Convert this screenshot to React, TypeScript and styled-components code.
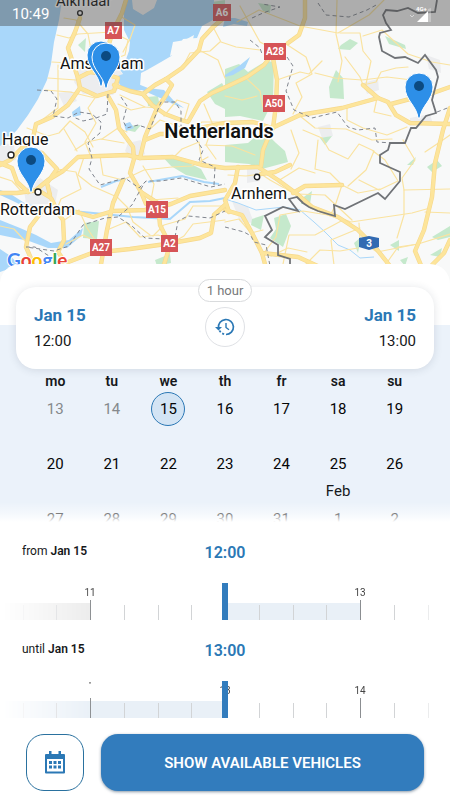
import React from "react";
import styled, { createGlobalStyle } from "styled-components";

const blue = "#2b78b5";
const font = 'Roboto, "Liberation Sans", sans-serif';

const GlobalStyle = createGlobalStyle`
  * { box-sizing: border-box; }
  body { margin: 0; background: #fff; font-family: ${font}; color: #16181a; }
  button, input { font: inherit; }
`;

const Page = styled.main`
  display: flex;
  flex-direction: column;
  min-height: 100vh;
  background: #fff;
`;

const MapArea = styled.section`
  position: relative;
  height: 284px;
  overflow: hidden;
`;

const MapDrawing = styled.svg`
  display: block;
  width: 100%;
  height: 100%;
  font-family: ${font};
`;

const StatusBar = styled.header`
  position: absolute;
  inset: 0 0 auto;
  display: flex;
  align-items: center;
  justify-content: space-between;
  height: 26px;
  padding: 2px 18px 0 12px;
  background: rgba(70, 70, 70, 0.42);
  color: #fff;
  font-size: 15px;
`;

const Sheet = styled.section`
  position: relative;
  display: flex;
  flex-direction: column;
  flex: 1;
  margin-top: -20px;
  padding-top: 23px;
  border-radius: 20px 20px 0 0;
  background: #fff;
`;

const Summary = styled.div`
  position: relative;
  z-index: 1;
  display: grid;
  grid-template-columns: 1fr auto 1fr;
  height: 82px;
  margin: 0 16px -44px;
  padding: 0 18px;
  border-radius: 20px;
  background: #fff;
  box-shadow: 0 1px 8px rgba(40, 60, 80, 0.14);
`;

const Moment = styled.div<{ $end?: boolean }>`
  display: flex;
  flex-direction: column;
  gap: 4px;
  padding-top: 17px;
  text-align: ${(p) => (p.$end ? "right" : "left")};
  line-height: 22px;
`;

const MomentDate = styled.strong`
  color: ${blue};
  font-size: 17px;
  font-weight: 700;
`;

const MomentTime = styled.span`
  font-size: 15px;
`;

const Middle = styled.div`
  display: flex;
  flex-direction: column;
  align-items: center;
  gap: 5px;
  margin-top: -8px;
`;

const Duration = styled.span`
  padding: 0 8px;
  border: 1px solid #d9dbdd;
  border-radius: 12px;
  background: #fff;
  color: #77797b;
  font-size: 13px;
  line-height: 21px;
`;

const RoundButton = styled.button`
  display: grid;
  place-items: center;
  width: 40px;
  height: 40px;
  padding: 0;
  border: 1px solid #dfe1e5;
  border-radius: 50%;
  background: #fff;
  color: ${blue};
`;

const CalendarArea = styled.div`
  position: relative;
  height: 197px;
  padding: 47px 27px 0;
  overflow: hidden;
  background: #ebf2fa;
  &::after {
    content: "";
    position: absolute;
    inset: auto 0 0;
    height: 20px;
    background: linear-gradient(rgba(255, 255, 255, 0), rgba(255, 255, 255, 0.5) 60%, #fff);
    pointer-events: none;
  }
`;

const Calendar = styled.table`
  width: 100%;
  table-layout: fixed;
  border-collapse: collapse;
  text-align: center;
  th {
    height: 20px;
    padding: 0;
    font-size: 14px;
    font-weight: 600;
    line-height: 18px;
    vertical-align: top;
  }
  td {
    padding: 0;
    vertical-align: top;
  }
`;

const MonthSlot = styled.div`
  height: 21px;
  font-size: 15px;
  line-height: 20px;
`;

const Day = styled.button<{ $past?: boolean; $selected?: boolean }>`
  display: block;
  width: 34px;
  height: 34px;
  margin: 0 auto;
  padding: 0;
  border: 1px solid ${(p) => (p.$selected ? blue : "transparent")};
  border-radius: 50%;
  background: ${(p) => (p.$selected ? "#d3e4f4" : "transparent")};
  color: ${(p) => (p.$past ? "#85898c" : "#050607")};
  font-size: 15px;
  line-height: 32px;
`;

const Times = styled.div`
  display: flex;
  flex-direction: column;
  gap: 20px;
  padding-top: 20px;
`;

const TimeHeading = styled.div`
  display: grid;
  grid-template-columns: 1fr auto 1fr;
  height: 41px;
  padding: 0 22px;
`;

const TimeLabel = styled.label`
  font-size: 12px;
  line-height: 18px;
  b { font-weight: 600; }
`;

const TimeValue = styled.output`
  color: ${blue};
  font-size: 16px;
  font-weight: 600;
  line-height: 22px;
`;

const RulerFrame = styled.div`
  position: relative;
  height: 37px;
  overflow: hidden;
`;

const Ruler = styled.div`
  display: grid;
  grid-template-columns: repeat(14, 1fr);
  grid-template-rows: 17px 20px;
  height: 37px;
  margin: 0 -2.5%;
  mask-image: linear-gradient(90deg, transparent 3%, #000 22%, #000 86%, transparent 99%);
`;

const HourLabel = styled.span<{ $at: number; $small?: boolean }>`
  grid-row: 1;
  grid-column: ${(p) => p.$at} / span 2;
  color: #444;
  font-size: ${(p) => (p.$small ? 8 : 10)}px;
  line-height: ${(p) => (p.$small ? 8 : 19)}px;
  text-align: center;
`;

const Segment = styled.span<{ $fill?: string }>`
  grid-row: 2;
  display: flex;
  align-items: flex-end;
  background: linear-gradient(${(p) => p.$fill || "transparent"} 0 0) 0 100% / 100% 17px no-repeat;
`;

const Tick = styled.i<{ $major?: boolean }>`
  width: 1px;
  height: ${(p) => (p.$major ? 20 : 15)}px;
  background: ${(p) => (p.$major ? "#8b8e91" : "#d2d4d6")};
`;

const Slider = styled.input`
  position: absolute;
  inset: 0;
  width: 100%;
  height: 37px;
  margin: 0;
  appearance: none;
  background: transparent;
  &::-webkit-slider-thumb {
    appearance: none;
    width: 6px;
    height: 37px;
    background: #327cbd;
  }
  &::-moz-range-thumb {
    width: 6px;
    height: 37px;
    border: 0;
    border-radius: 0;
    background: #327cbd;
  }
`;

const Actions = styled.footer`
  display: flex;
  gap: 17px;
  padding: 16px 26px 9px;
`;

const CalendarButton = styled.button`
  display: grid;
  place-items: center;
  width: 58px;
  height: 57px;
  padding: 0;
  border: 1px solid #2a719f;
  border-radius: 18px;
  background: #fff;
  color: ${blue};
`;

const PrimaryButton = styled.button`
  flex: 1;
  height: 57px;
  border: 0;
  border-radius: 17px;
  background: #327cbd;
  box-shadow: 0 1px 3px rgba(20, 50, 80, 0.5);
  color: #fff;
  font-size: 15px;
  font-weight: 600;
`;

const majorRoads = [
  "M126 0L122 13L113 31L107 50L105 74",
  "M80 18L75 32L68 48L73 63L78 78",
  "M78 78L90 72L105 74L118 78L114 91L97 96L80 88Z",
  "M114 85L130 91L143 94L155 85L166 79L182 68L199 50L202 39L213 27L225 17",
  "M166 79L172 85L165 97L157 108L152 120L145 137L140 158",
  "M143 94L152 105L165 114L181 120L188 122L200 101L212 93L228 86L247 77L264 65L271 56",
  "M288 43L299 35L305 18L305 0",
  "M80 88L68 105L52 117L36 124L33 138L22 148L10 160L0 165",
  "M22 148L42 153L57 169L47 183L50 195",
  "M0 163L12 168L17 182L28 192",
  "M108 96L116 110L119 128L133 147L134 159L130 173L141 192L146 204",
  "M36 190L48 180L63 171L78 157L100 156L127 155L140 158L173 157L202 165L225 168L258 167L278 180L297 194L312 207L338 217L358 230L375 247L390 266",
  "M145 140L160 134L178 134L190 130",
  "M273 58L277 80L276 105L273 128L268 138L263 150L261 166",
  "M190 130L225 123L253 122L272 128L300 115L342 108L378 98L363 85",
  "M378 98L388 102L396 115L410 123L450 124",
  "M391 104L410 99L433 93L450 87",
  "M0 193L17 193L38 190L51 198L56 208L76 212L93 217L113 211L145 210L171 204L190 196L225 190",
  "M43 210L30 227L26 247L36 270",
  "M51 204L63 220L64 240L58 252L72 272",
  "M123 180L113 203L107 230L100 270",
  "M63 264L92 253L130 249L166 244L200 238L211 233L214 215L225 205",
  "M141 192L158 203L160 225L170 245L163 268",
  "M225 210L242 215L252 233L262 253L266 268",
  "M238 167L235 183L225 200L229 212",
  "M450 108L443 130L435 163L432 197L424 230L415 251L423 270",
  "M293 193L305 186L342 185",
  "M262 253L298 257L322 268",
  "M432 265L444 253L450 240",
  "M261 174L275 172L290 165",
];

const minorRoads = [
  "M64 18L76 20L88 34L91 50L101 58", "M57 35L69 38L78 34L112 32L128 40L125 55L112 60",
  "M52 62L68 63L83 70", "M48 78L76 80", "M45 90L70 92L95 98", "M58 65L58 108L38 123",
  "M120 16L135 25L130 39L123 52", "M95 98L88 108L96 123L85 142L91 157",
  "M120 95L145 107L158 108", "M118 104L131 110L145 107", "M164 116L177 100L189 104L184 121",
  "M182 68L190 53L210 51L220 42", "M199 50L218 60L225 78", "M213 27L221 42L236 47L260 50",
  "M240 6L260 42L273 49", "M237 22L259 10L300 26L338 33L369 15L384 0",
  "M337 0L336 34L342 61L338 82", "M340 33L360 33L363 51L371 61L366 84",
  "M363 36L382 30L408 54L432 62L450 65", "M286 44L306 57L312 74L296 83L302 97L293 114",
  "M315 73L335 78L362 80L387 77L412 80", "M345 57L360 77L363 85", "M363 85L376 82L381 72L396 68L408 67",
  "M347 106L347 120L363 128L387 135L407 127", "M300 116L315 128L346 129L372 140L392 139",
  "M277 80L300 72L309 74L322 61", "M377 98L374 112L391 116", "M247 79L260 91L263 107L279 112",
  "M225 96L242 100L257 96", "M190 131L202 122L226 122", "M204 104L213 125L206 145L216 159",
  "M291 130L299 153L291 169", "M303 130L322 138L329 150L348 159L359 144L374 151L366 170L348 186",
  "M318 140L315 169L330 173L342 185L358 193L380 189", "M342 185L335 206L330 216",
  "M359 180L379 190L398 181L385 160L373 151", "M278 181L299 168L315 173", "M297 194L325 195L352 220",
  "M338 217L351 222L392 216L412 213L430 208", "M359 223L360 240L377 252L418 244",
  "M403 140L415 160L402 178L404 190L450 189", "M404 190L404 215L397 238",
  "M425 152L440 142L450 135", "M386 264L398 247L418 244L450 234", "M425 212L450 213",
  "M263 254L276 237L280 215L303 211L334 216", "M283 264L289 235L315 235L343 220",
  "M334 265L331 240L360 228", "M305 265L320 250L340 251L358 248", "M271 256L288 248L307 252",
  "M225 222L239 219L251 233L263 230", "M228 175L246 176L261 174L270 180L293 193",
  "M84 157L78 175L92 186L117 197L128 208", "M57 169L76 172L81 189L61 199L57 209",
  "M100 156L103 175L123 180L144 170L172 167L192 166L208 157", "M143 166L154 184L151 200L178 198",
  "M63 221L79 210L87 228L101 249", "M107 230L126 222L140 237L158 235L177 241",
  "M153 236L164 225L185 219L193 206L225 206", "M170 244L184 236L193 224L225 220",
  "M66 244L83 235L103 245", "M27 243L14 229L0 226", "M0 177L12 181L22 192",
  "M75 150L87 142L101 139L124 143", "M102 139L118 128L127 132", "M27 128L48 136L59 133L70 121L85 132L93 147",
  "M64 129L77 151", "M149 130L160 120L181 127", "M174 157L182 149L199 142L202 164",
  "M205 145L232 146L255 155", "M128 209L133 222L150 235",
];

const dashedLines = [
  "M37 90L51 91L57 99L53 116L68 118L79 112L92 114L101 122L100 133L88 143L92 158L89 169L100 185L125 178L139 188L146 181L161 181L181 178L211 187L225 184",
  "M108 94L107 114L96 118L83 121L73 117", "M121 97L127 106L123 121L127 128L138 125L150 129L161 102L175 102L181 111L181 126L194 136L203 150L199 160L215 167L214 185",
  "M252 18L263 13L280 7L262 4", "M318 3L326 15L349 17L367 10L378 4", "M250 40L260 48L262 54",
  "M287 57L293 66L286 91L294 110L312 118L337 112L348 127L358 130L375 128L377 142L392 143",
  "M60 263L35 247L26 247L54 251L69 246L83 225L105 218L118 217L132 226L145 238L164 239",
  "M119 216L132 205L138 194L145 182", "M175 237L178 221L188 216L210 218L225 211",
  "M225 227L244 232L251 236L254 242L266 245L270 266", "M437 112L450 107",
];

const pins = [
  { x: 101, y: 54 },
  { x: 106, y: 56 },
  { x: 419, y: 86 },
  { x: 31, y: 160 },
];

const shields = [
  { text: "A7", x: 105, y: 22, w: 17 },
  { text: "A6", x: 213, y: 4, w: 18 },
  { text: "A28", x: 264, y: 43, w: 22 },
  { text: "A50", x: 263, y: 95, w: 22 },
  { text: "A15", x: 146, y: 201, w: 22 },
  { text: "A27", x: 90, y: 239, w: 22 },
  { text: "A2", x: 161, y: 235, w: 17 },
];

const Paths = ({ d }: { d: string[] }) => (
  <>
    {d.map((path) => (
      <path key={path} d={path} />
    ))}
  </>
);

function NetherlandsMap() {
  return (
    <MapDrawing viewBox="0 0 450 284" preserveAspectRatio="xMidYMin slice" role="img" aria-label="Map of the Netherlands">
      <defs>
        <clipPath id="hagueClip">
          <rect x="0" y="130" width="60" height="16" />
        </clipPath>
      </defs>
      <rect width="450" height="284" fill="#f8f9f9" />
      <g fill="#ecedef">
        <path d="M78 66L115 63L126 80L113 95L83 94L74 82Z" />
        <path d="M24 190L40 178L58 190L55 204L26 204ZM0 142L14 145L16 160L0 164Z" />
        <path d="M128 143L141 140L145 154L134 160L125 151ZM232 201L248 207L254 223L240 222Z" />
        <path d="M410 118L430 114L433 124L410 126ZM58 93L72 91L77 101L64 106ZM318 127L330 124L333 136L322 138Z" />
        <path d="M363 83L378 79L379 90L367 94ZM247 169L261 169L260 181L247 183ZM426 55L440 60L441 73L429 69Z" />
      </g>
      <g fill="#c5e9cc">
        <path d="M225 69L239 64L248 72L266 61L274 62L273 101L263 121L240 116L225 117Z" />
        <path d="M225 145L248 143L263 130L276 143L285 151L288 162L262 169L249 164L225 162Z" />
        <path d="M207 92L222 83L228 94L225 109L215 104ZM336 70L343 78L344 99L330 98L329 87Z" />
        <path d="M341 45L350 39L358 43L350 50L338 49ZM385 36L405 45L406 49L389 44Z" />
        <path d="M161 155L181 159L201 169L207 180L186 175L171 166ZM84 223L99 221L97 239L83 238Z" />
        <path d="M252 219L264 215L261 230L251 225ZM274 218L286 214L291 226L283 247L270 238L276 229Z" />
        <path d="M301 199L312 191L310 204L301 204ZM320 138L332 136L325 145ZM407 165L416 157L413 165Z" />
        <path d="M427 167L437 160L442 166L432 172ZM432 237L450 226V237L438 240ZM390 245L399 240L399 251Z" />
        <path d="M354 243L361 237L358 253ZM147 97L158 96L160 108L148 106ZM128 126L141 125L135 132L126 130Z" />
        <path d="M78 45L86 38L85 52ZM205 3L225 0V4L213 8ZM258 3L271 5L270 13L263 11ZM430 255L442 248L440 257Z" />
        <path d="M181 130L190 127L193 136L184 139ZM155 260L170 254L171 263L157 266ZM400 260L408 257L405 266Z" />
      </g>
      <g fill="#a9d7fa">
        <path d="M0 0H62L59 20L54 42L51 64L47 80L38 99L28 115L17 130L8 139L0 146Z" />
        <path d="M124 0H132L133 9L143 15L154 8L157 0H214L213 20L202 26L197 38L183 39L173 55L161 62L147 70L141 73L140 86L131 91L121 86L115 77L123 74L118 67L125 62L129 51L130 42L124 30Z" />
        <path d="M116 76L133 82L148 88L164 90L174 101L184 108L173 104L158 97L142 90L129 92Z" />
        <path d="M225 18L235 18L248 22L247 26L234 24L223 27ZM225 75L239 66L250 57L245 68L233 75L225 77Z" />
        <path d="M0 220L20 228L36 235L51 243L69 240L83 228L81 236L67 248L48 248L29 241L0 235Z" />
        <path d="M0 249L9 255L20 265L0 272ZM0 190L9 193L26 204L34 205L29 209L13 201L0 195Z" />
        <path d="M72 112L80 106L81 115L73 117ZM124 124L130 122L134 128L126 131Z" />
      </g>
      <g fill="none" stroke="#a9d7fa" strokeWidth="2">
        <path d="M72 211L104 214L133 217L170 219L190 202L210 201L225 198" />
        <path d="M101 187L116 181L126 179M148 182L165 179L182 176L204 182L219 184" />
        <path d="M225 199L238 203L256 210L284 207L300 210L314 222L325 232L338 245L350 250L360 258L374 257" strokeWidth="1" />
      </g>
      <path d="M173 42L185 40L194 35L192 43L181 53L170 56ZM163 63L178 51L180 59L166 66Z" fill="#f8f9f9" />
      <g fill="none" strokeLinejoin="round" strokeLinecap="round">
        <g stroke="#fae3a0" strokeWidth="1.2"><Paths d={minorRoads} /></g>
        <g stroke="#f6d88c" strokeWidth="4.4"><Paths d={majorRoads} /></g>
        <g stroke="#fde59b" strokeWidth="3.2"><Paths d={majorRoads} /></g>
      </g>
      <g fill="none" stroke="#81868f" strokeWidth="1" strokeDasharray="4 3"><Paths d={dashedLines} /></g>
      <path
        d="M437 0L435 12L418 13L408 8L397 11L386 10L383 15L386 23L391 30L380 33L379 37L382 51L395 58L405 57L418 63L425 55L436 70L438 77L432 100L436 113L426 116L416 128L411 128L405 143L390 143L388 150L380 155L380 163L400 172L400 181L385 199L378 193L345 209L334 205L335 216L318 211L309 207L303 203L297 197L289 199L298 211L283 207L265 216L272 230L265 237L278 245L278 255L290 259L290 268"
        fill="none" stroke="#707377" strokeWidth="1.8"
      />
      {shields.map((s) => (
        <g key={s.text}>
          <rect x={s.x} y={s.y} width={s.w} height="17" fill="#d65457" />
          <text x={s.x + s.w / 2} y={s.y + 12} fill="#fff" fontSize="10" fontWeight="700" textAnchor="middle">{s.text}</text>
        </g>
      ))}
      <path d="M359 238L369 236L379 238V247L369 250L359 247Z" fill="#326bb2" />
      <text x="369" y="247" fill="#fff" fontSize="10" fontWeight="700" textAnchor="middle">3</text>
      <g fill="#111" stroke="#fff" strokeWidth="3" paintOrder="stroke" strokeLinejoin="round" fontSize="16">
        <text x="56" y="6" fontSize="15">Alkmaar</text>
        <text x="60" y="69">Amsterdam</text>
        <text x="2" y="145" clipPath="url(#hagueClip)">Hague</text>
        <text x="0" y="215">Rotterdam</text>
        <text x="231" y="199">Arnhem</text>
        <text x="219" y="138" fontSize="20" fontWeight="600" textAnchor="middle">Netherlands</text>
      </g>
      <g fill="#fff" stroke="#222" strokeWidth="1.4">
        <circle cx="80" cy="13" r="2.4" />
        <circle cx="11" cy="155" r="3" />
        <circle cx="38" cy="192" r="3" />
        <circle cx="257" cy="177" r="2.7" />
      </g>
      <text x="7" y="267" fontSize="19" fontWeight="700" stroke="#fff" strokeWidth="2" paintOrder="stroke" fontFamily="Lato, sans-serif">
        <tspan fill="#4285f4">G</tspan>
        <tspan fill="#ea4335">o</tspan>
        <tspan fill="#fbbc05">o</tspan>
        <tspan fill="#4285f4">g</tspan>
        <tspan fill="#34a853">l</tspan>
        <tspan fill="#ea4335">e</tspan>
      </text>
      {pins.map((p) => (
        <g key={p.x} transform={`translate(${p.x} ${p.y})`}>
          <path d="M-1 32C-2 20-14 14-14 1A14 14 0 0 1 14 1C14 14 2 20 1 32Z" fill="#2d8fe8" stroke="#fff" strokeWidth="1" />
          <circle r="5" fill="#0c4a80" />
        </g>
      ))}
    </MapDrawing>
  );
}

const SignalIcon = () => (
  <svg width="24" height="18" viewBox="0 0 24 18" aria-label="Mobile signal" role="img">
    <path d="M20 6V17H9Z" fill="#fff" />
    <path d="M20 4V17H23V3Z" fill="#fff" opacity=".3" />
    <path d="M2 10L4 12L6 10" fill="none" stroke="#fff" opacity=".5" />
    <text x="8" y="6" fill="#fff" fontSize="6" fontWeight="700" fontFamily={font}>4G+</text>
  </svg>
);

const HistoryIcon = () => (
  <svg width="22" height="20" viewBox="0 0 22 20" fill="none" stroke="currentColor" strokeWidth="1.7" aria-hidden="true">
    <path d="M4.5 11A7.5 7.5 0 1 1 12 17.500" />
    <path d="M5.400 13.600L6.700 15.300M8.200 16.400L10.100 17.200" />
    <path d="M1 10L4.500 13.500L8 10Z" fill="currentColor" stroke="none" />
    <path d="M12 6V10.500L15 12.800" strokeWidth="1.400" />
  </svg>
);

const CalendarIcon = () => (
  <svg width="20" height="23" viewBox="0 0 20 23" aria-hidden="true">
    <path d="M4 0H6.5V3H13.5V0H16V3H19A1 1 0 0 1 20 4V21.5A1 1 0 0 1 19 22.5H1A1 1 0 0 1 0 21.5V4A1 1 0 0 1 1 3H4ZM2 8V20.500H18V8Z" fill="currentColor" fillRule="evenodd" />
    <path d="M4 10H7V13H4ZM8.5 10H11.5V13H8.5ZM13 10H16V13H13ZM4 14.5H7V17.5H4ZM8.5 14.5H11.5V17.5H8.5ZM13 14.5H16V17.5H13Z" fill="currentColor" />
  </svg>
);

const weekdays = ["mo", "tu", "we", "th", "fr", "sa", "su"];
const weeks = [
  [13, 14, 15, 16, 17, 18, 19],
  [20, 21, 22, 23, 24, 25, 26],
  [27, 28, 29, 30, 31, 1, 2],
];

type TimePickerProps = {
  id: string;
  label: string;
  time: string;
  fill: (index: number) => string | undefined;
  hours: { at: number; text: string; small?: boolean }[];
};

function TimePicker({ id, label, time, fill, hours }: TimePickerProps) {
  return (
    <div>
      <TimeHeading>
        <TimeLabel htmlFor={id}>
          {label} <b>Jan 15</b>
        </TimeLabel>
        <TimeValue htmlFor={id}>{time}</TimeValue>
      </TimeHeading>
      <RulerFrame>
        <Ruler>
          {hours.map((h) => (
            <HourLabel key={h.at} $at={h.at} $small={h.small}>{h.text}</HourLabel>
          ))}
          {Array.from({ length: 14 }, (_, i) => (
            <Segment key={i} $fill={fill(i)}>
              <Tick $major={i % 4 === 3} />
            </Segment>
          ))}
        </Ruler>
        <Slider id={id} type="range" min={0} max={100} defaultValue={50} />
      </RulerFrame>
    </div>
  );
}

export default function App() {
  return (
    <Page>
      <GlobalStyle />
      <MapArea>
        <NetherlandsMap />
        <StatusBar>
          <span>10:49</span>
          <SignalIcon />
        </StatusBar>
      </MapArea>
      <Sheet>
        <Summary>
          <Moment>
            <MomentDate>Jan 15</MomentDate>
            <MomentTime>12:00</MomentTime>
          </Moment>
          <Middle>
            <Duration>1 hour</Duration>
            <RoundButton aria-label="Reset time"><HistoryIcon /></RoundButton>
          </Middle>
          <Moment $end>
            <MomentDate>Jan 15</MomentDate>
            <MomentTime>13:00</MomentTime>
          </Moment>
        </Summary>
        <CalendarArea>
          <Calendar>
            <thead>
              <tr>{weekdays.map((d) => <th key={d} scope="col">{d}</th>)}</tr>
            </thead>
            <tbody>
              {weeks.map((week, row) => (
                <tr key={row}>
                  {week.map((day) => (
                    <td key={day}>
                      {row > 0 && <MonthSlot>{day === 1 ? "Feb" : null}</MonthSlot>}
                      <Day $past={day === 13 || day === 14} $selected={day === 15}>{day}</Day>
                    </td>
                  ))}
                </tr>
              ))}
            </tbody>
          </Calendar>
        </CalendarArea>
        <Times>
          <TimePicker
            id="from" label="from" time="12:00"
            fill={(i) => (i < 3 ? "#ececec" : i > 6 && i < 11 ? "#e9f0f7" : undefined)}
            hours={[{ at: 3, text: "11" }, { at: 11, text: "13" }]}
          />
          <TimePicker
            id="until" label="until" time="13:00"
            fill={(i) => (i < 7 ? "#e9f0f7" : undefined)}
            hours={[{ at: 3, text: '"', small: true }, { at: 7, text: "13" }, { at: 11, text: "14" }]}
          />
        </Times>
        <Actions>
          <CalendarButton aria-label="Choose date"><CalendarIcon /></CalendarButton>
          <PrimaryButton>SHOW AVAILABLE VEHICLES</PrimaryButton>
        </Actions>
      </Sheet>
    </Page>
  );
}
